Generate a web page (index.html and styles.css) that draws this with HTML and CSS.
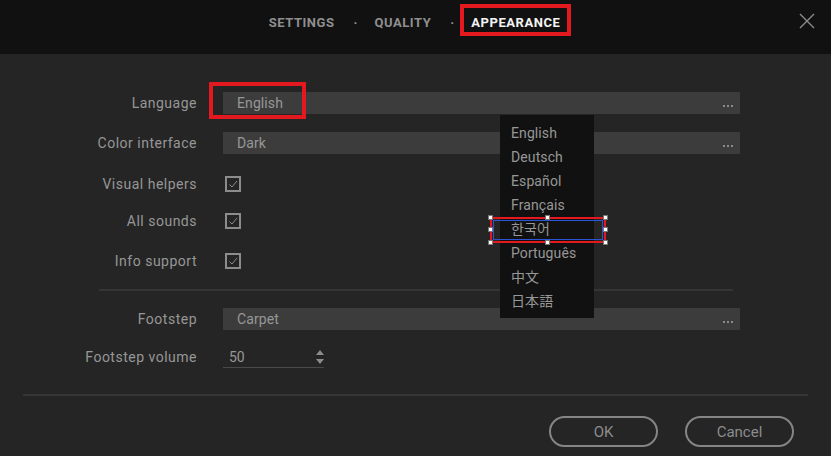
FILE: index.html
```html
<!DOCTYPE html>
<html>
<head>
<meta charset="utf-8">
<link rel="stylesheet" href="styles.css">
</head>
<body>
<div class="dialog">
  <header class="topbar">
    <nav class="tabs">
      <span class="tab">SETTINGS</span>
      <span class="sep">·</span>
      <span class="tab">QUALITY</span>
      <span class="sep">·</span>
      <span class="tab active">APPEARANCE<span class="mark mark-tab"></span></span>
    </nav>
    <svg class="close" width="16" height="16" viewBox="0 0 16 16"><path d="M1 1L15 15M15 1L1 15" stroke="#8c8c8c" stroke-width="1.4" fill="none"/></svg>
  </header>
  <main class="form">
    <div class="row r-lang">
      <label class="lbl">Language</label>
      <div class="field"><span class="val">English</span><span class="dots"><i></i><i></i><i></i></span><span class="mark mark-lang"></span></div>
    </div>
    <div class="row r-color">
      <label class="lbl">Color interface</label>
      <div class="field"><span class="val">Dark</span><span class="dots"><i></i><i></i><i></i></span></div>
    </div>
    <div class="row r-visual">
      <label class="lbl">Visual helpers</label>
      <span class="check"><svg width="12" height="12" viewBox="0 0 12 12"><path d="M2.5 6.5L5 9L10 3" stroke="#8c8c8c" stroke-width="1" fill="none"/></svg></span>
    </div>
    <div class="row r-sounds">
      <label class="lbl">All sounds</label>
      <span class="check"><svg width="12" height="12" viewBox="0 0 12 12"><path d="M2.5 6.5L5 9L10 3" stroke="#8c8c8c" stroke-width="1" fill="none"/></svg></span>
    </div>
    <div class="row r-info">
      <label class="lbl">Info support</label>
      <span class="check"><svg width="12" height="12" viewBox="0 0 12 12"><path d="M2.5 6.5L5 9L10 3" stroke="#8c8c8c" stroke-width="1" fill="none"/></svg></span>
    </div>
    <hr class="divider">
    <div class="row r-foot">
      <label class="lbl">Footstep</label>
      <div class="field"><span class="val">Carpet</span><span class="dots"><i></i><i></i><i></i></span></div>
    </div>
    <div class="row r-vol">
      <label class="lbl">Footstep volume</label>
      <div class="spin"><span class="num">50</span>
        <svg class="arrows" width="10" height="18" viewBox="0 0 10 18"><path d="M5 2L9 7H1Z M1 11H9L5 16Z" fill="#8c8c8c"/></svg>
      </div>
    </div>
  </main>
  <footer class="footer">
    <button class="btn">OK</button>
    <button class="btn">Cancel</button>
  </footer>
  <ul class="menu">
    <li>English</li>
    <li>Deutsch</li>
    <li>Español</li>
    <li>Français</li>
    <li class="sel">한국어<span class="selbox"><b class="h h1"></b><b class="h h2"></b><b class="h h3"></b><b class="h h4"></b><b class="h h5"></b><b class="h h6"></b><b class="h h7"></b><b class="h h8"></b></span></li>
    <li>Português</li>
    <li>中文</li>
    <li>日本語</li>
  </ul>
</div>
</body>
</html>
```

FILE: styles.css
```css
* { box-sizing: border-box; }
html, body { margin: 0; padding: 0; }
body {
  width: 831px; height: 456px; overflow: hidden;
  background: #252525;
  font-family: Roboto, "Noto Sans CJK KR", "Noto Sans CJK SC", sans-serif;
  color: #979797;
}
.dialog { position: relative; width: 831px; height: 456px; background: #252525; }
.topbar {
  height: 54px; background: #111111;
  display: flex; align-items: center; justify-content: center;
  position: relative;
}
.tabs { display: flex; align-items: center; padding-bottom: 10px; margin-left: -2px; }
.tab {
  font-weight: 700; font-size: 13px; letter-spacing: 0.55px;
  color: #8f8f8f; position: relative;
}
.tab.active { color: #f4f4f4; }
.sep { color: #8f8f8f; font-weight: 700; font-size: 13px; margin: 0 17px 0 19px; }
.close { position: absolute; left: 799px; top: 13px; }
.mark { position: absolute; border: 4px solid #e3191f; pointer-events: none; }
.mark-tab { left: -11px; top: -11px; width: 111px; height: 32px; }
.form { padding: 38px 91px 0 23px; display: flex; flex-direction: column; }
.row { display: flex; align-items: center; height: 22px; }
.lbl { width: 174px; text-align: right; font-size: 14px; letter-spacing: 0.5px; color: #979797; margin-right: 26px; }
.field {
  position: relative; flex: 1; height: 22px; background: #3c3c3c;
  display: flex; align-items: center; padding-left: 14px;
}
.val { font-size: 14px; color: #979797; letter-spacing: 0.1px; }
.dots { position: absolute; right: 7px; top: 13px; display: flex; gap: 2px; }
.dots i { width: 2px; height: 2px; background: #8a8a8a; display: block; }
.mark-lang { left: -14px; top: -10px; width: 97px; height: 37px; }
.r-color { margin-top: 18px; }
.r-visual { margin-top: 19px; }
.r-sounds { margin-top: 15px; }
.r-info { margin-top: 18px; }
.divider { border: 0; height: 2px; background: #353535; margin: 17px 7px 0 76px; }
.r-foot { margin-top: 17px; }
.r-vol { margin-top: 16px; }
.check {
  width: 16px; height: 16px; border: 2px solid #8c8c8c; margin-left: 2px;
  display: flex; align-items: center; justify-content: center;
}
.spin {
  width: 101px; height: 22px; border-bottom: 1px solid #4a4a4a;
  display: flex; align-items: center; justify-content: space-between; padding: 0 0 0 6px;
}
.num { font-size: 14px; color: #979797; }
.arrows { margin-right: -1px; }
.footer {
  position: absolute; left: 23px; right: 23px; top: 394px;
  border-top: 2px solid #363636;
  display: flex; justify-content: flex-end; gap: 27px; padding-top: 20px; padding-right: 14px;
}
.btn {
  width: 109px; height: 31px; border-radius: 16px; border: 2px solid #858585;
  background: transparent; color: #8c8c8c; font-family: inherit; font-size: 15px;
}
.menu {
  position: absolute; left: 500px; top: 115px; width: 94px; height: 203px;
  margin: 0; padding: 6px 0 0 11px; list-style: none; background: #111111;
}
.menu li { height: 24px; line-height: 24px; font-size: 14px; color: #979797; position: relative; letter-spacing: 0.1px; }
.selbox {
  position: absolute; left: -21px; top: 0; width: 116px; height: 26px;
  border: 2px solid #e3191f; outline: 1px dashed #ffffff; outline-offset: -4px;
}
.selbox::before {
  content: ""; position: absolute; inset: 1px; border: 1px solid #2b55d6;
}
.h { position: absolute; width: 5px; height: 5px; background: #fff; border: 1px solid #777; }
.h1 { left: -4px; top: -4px; }
.h2 { left: 53px; top: -4px; }
.h3 { right: -4px; top: -4px; }
.h4 { left: -4px; top: 8px; }
.h5 { right: -4px; top: 8px; }
.h6 { left: -4px; bottom: -4px; }
.h7 { left: 53px; bottom: -4px; }
.h8 { right: -4px; bottom: -4px; }
```
